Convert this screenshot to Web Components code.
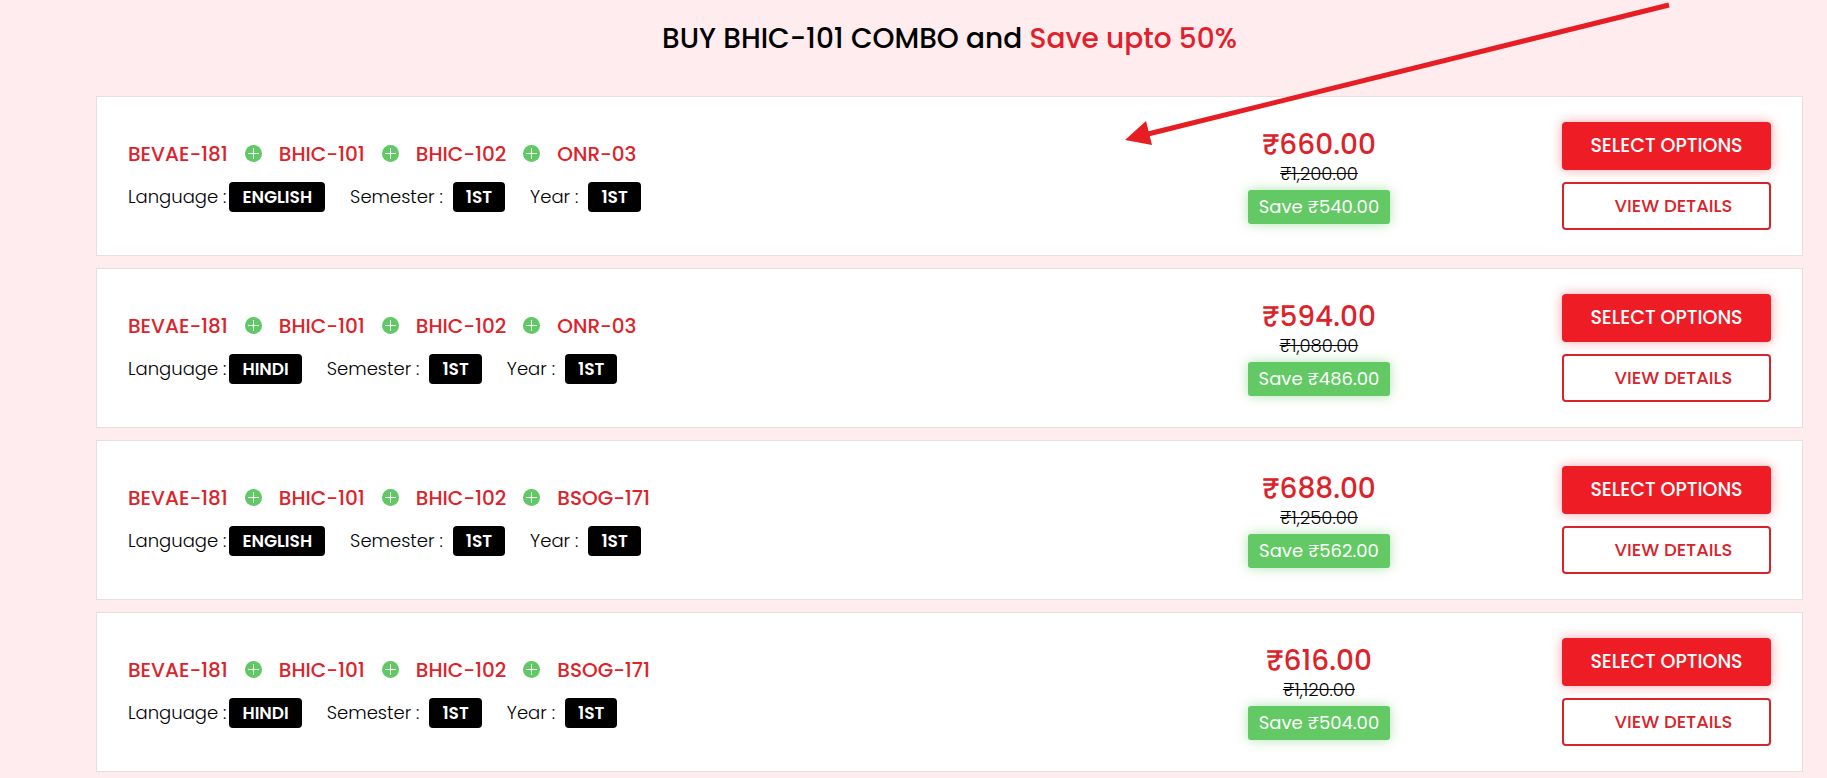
<!DOCTYPE html>
<html lang="en">
<head>
<meta charset="utf-8">
<meta name="viewport" content="width=device-width, initial-scale=1">
<title>BHIC-101 combo offers</title>
<style>
  html { background: #feecee; }
  body { margin: 0; overflow-x: hidden; font-family: Poppins, Inter, "Open Sans", sans-serif; color: #000; }
</style>
</head>
<body>
<combo-section>
  <span slot="title">BUY BHIC-101 COMBO and</span>
  <span slot="offer">Save upto 50%</span>
  <combo-card courses="BEVAE-181,BHIC-101,BHIC-102,ONR-03" language="ENGLISH" semester="1ST" year="1ST" price="₹660.00" was="₹1,200.00" save="₹540.00"></combo-card>
  <combo-card courses="BEVAE-181,BHIC-101,BHIC-102,ONR-03" language="HINDI" semester="1ST" year="1ST" price="₹594.00" was="₹1,080.00" save="₹486.00"></combo-card>
  <combo-card courses="BEVAE-181,BHIC-101,BHIC-102,BSOG-171" language="ENGLISH" semester="1ST" year="1ST" price="₹688.00" was="₹1,250.00" save="₹562.00"></combo-card>
  <combo-card courses="BEVAE-181,BHIC-101,BHIC-102,BSOG-171" language="HINDI" semester="1ST" year="1ST" price="₹616.00" was="₹1,120.00" save="₹504.00"></combo-card>
</combo-section>

<script>
const define = (name, html, connect) => {
  const template = document.createElement('template');
  template.innerHTML = html;
  customElements.define(name, class extends HTMLElement {
    constructor() {
      super();
      this.attachShadow({ mode: 'open' }).append(template.content.cloneNode(true));
    }
    connectedCallback() { if (connect) connect(this, this.shadowRoot); }
  });
};

define('combo-section', `
  <style>
    :host { display: block; position: relative; padding: 0 24px 8px 96px; }
    h2 { margin: 0; padding: 17px 0 35px; font-size: 28px; line-height: 44px; font-weight: 500; text-align: center; }
    .offer { color: #e2202a; }
    .list { display: flex; flex-direction: column; gap: 12px; }
    svg { position: absolute; top: 0; right: 156px; pointer-events: none; }
  </style>
  <h2><slot name="title"></slot> <span class="offer"><slot name="offer"></slot></span></h2>
  <div class="list"><slot></slot></div>
  <svg width="547" height="150" viewBox="0 0 547 150" aria-hidden="true">
    <path d="M545 5 24 134" stroke="#e61e23" stroke-width="5"/>
    <path d="M1 140 22 121 28 145Z" fill="#e61e23"/>
  </svg>
`);

define('plus-badge', `
  <style>
    :host { display: block; width: 17px; height: 17px; flex: none; }
    svg { display: block; }
  </style>
  <svg width="17" height="17" viewBox="0 0 17 17" aria-hidden="true">
    <circle cx="8.5" cy="8.5" r="8.5" fill="#60c864"/>
    <path d="M8.5 3v11M3 8.5h11" stroke="#fff" stroke-width="1"/>
  </svg>
`);

define('spec-tag', `
  <style>
    :host { display: flex; align-items: center; font-size: 18px; line-height: 30px; }
    .value { padding: 0 13px; border-radius: 4px; background: #000; color: #fff; font-size: 17px; font-weight: 600; }
    .label { font-weight: 300; margin-right: var(--label-gap, 10px); }
  </style>
  <span class="label"><slot name="label"></slot></span><span class="value"><slot></slot></span>
`);

define('price-block', `
  <style>
    :host { display: flex; flex-direction: column; align-items: center; }
    .price { color: #dc232a; font-size: 28px; line-height: 34px; font-weight: 500; }
    del { font-size: 18px; line-height: 24px; font-weight: 300; text-decoration-thickness: 1px; margin-bottom: 4px; }
    .save { padding: 0 11px; border-radius: 3px; background: #62c964; color: #fff; font-size: 18px; line-height: 34px; box-shadow: 0 0 12px #62c96480; }
  </style>
  <span class="price"><slot name="price"></slot></span>
  <del><slot name="was"></slot></del>
  <span class="save">Save <slot name="save"></slot></span>
`);

define('combo-actions', `
  <style>
    :host { display: flex; flex-direction: column; gap: 12px; }
    button, a { box-sizing: border-box; height: 48px; border-radius: 4px; font: 500 18px/44px Poppins, Inter, "Open Sans", sans-serif; text-align: center; }
    button { padding: 0; border: 0; background: #ee1c25; color: #fff; font-size: 19px; box-shadow: 0 0 12px #ee1c2566; cursor: pointer; }
    a { border: 2px solid #d8232b; padding-left: 14px; color: #d8232b; text-decoration: none; }
  </style>
  <button type="button">SELECT OPTIONS</button>
  <a href="#details">VIEW DETAILS</a>
`);

define('combo-card', `
  <style>
    :host { display: grid; grid-template-columns: minmax(0, 195fr) minmax(0, 100fr) 209px; align-items: center; padding: 25px 31px; border: 1px solid #ecdde0; background: #fff; }
    .courses { display: flex; align-items: center; gap: 17px; margin-bottom: 16px; padding-top: 1px; color: #dc232a; font-size: 20px; line-height: 24px; font-weight: 500; }
    .specs { display: flex; gap: 25px; }
    .first { --label-gap: 3px; }
  </style>
  <div>
    <div class="courses"></div>
    <div class="specs">
      <spec-tag class="first"><span slot="label">Language :</span><span data-field="language"></span></spec-tag>
      <spec-tag><span slot="label">Semester :</span><span data-field="semester"></span></spec-tag>
      <spec-tag><span slot="label">Year :</span><span data-field="year"></span></spec-tag>
    </div>
  </div>
  <price-block>
    <span slot="price" data-field="price"></span>
    <span slot="was" data-field="was"></span>
    <span slot="save" data-field="save"></span>
  </price-block>
  <combo-actions></combo-actions>
`, (host, root) => {
  root.querySelectorAll('[data-field]').forEach(el => { el.textContent = host.getAttribute(el.dataset.field); });
  const row = root.querySelector('.courses');
  row.replaceChildren();
  host.getAttribute('courses').split(',').forEach((code, i) => {
    if (i) row.append(document.createElement('plus-badge'));
    const span = document.createElement('span');
    span.textContent = code;
    row.append(span);
  });
});
</script>
</body>
</html>
